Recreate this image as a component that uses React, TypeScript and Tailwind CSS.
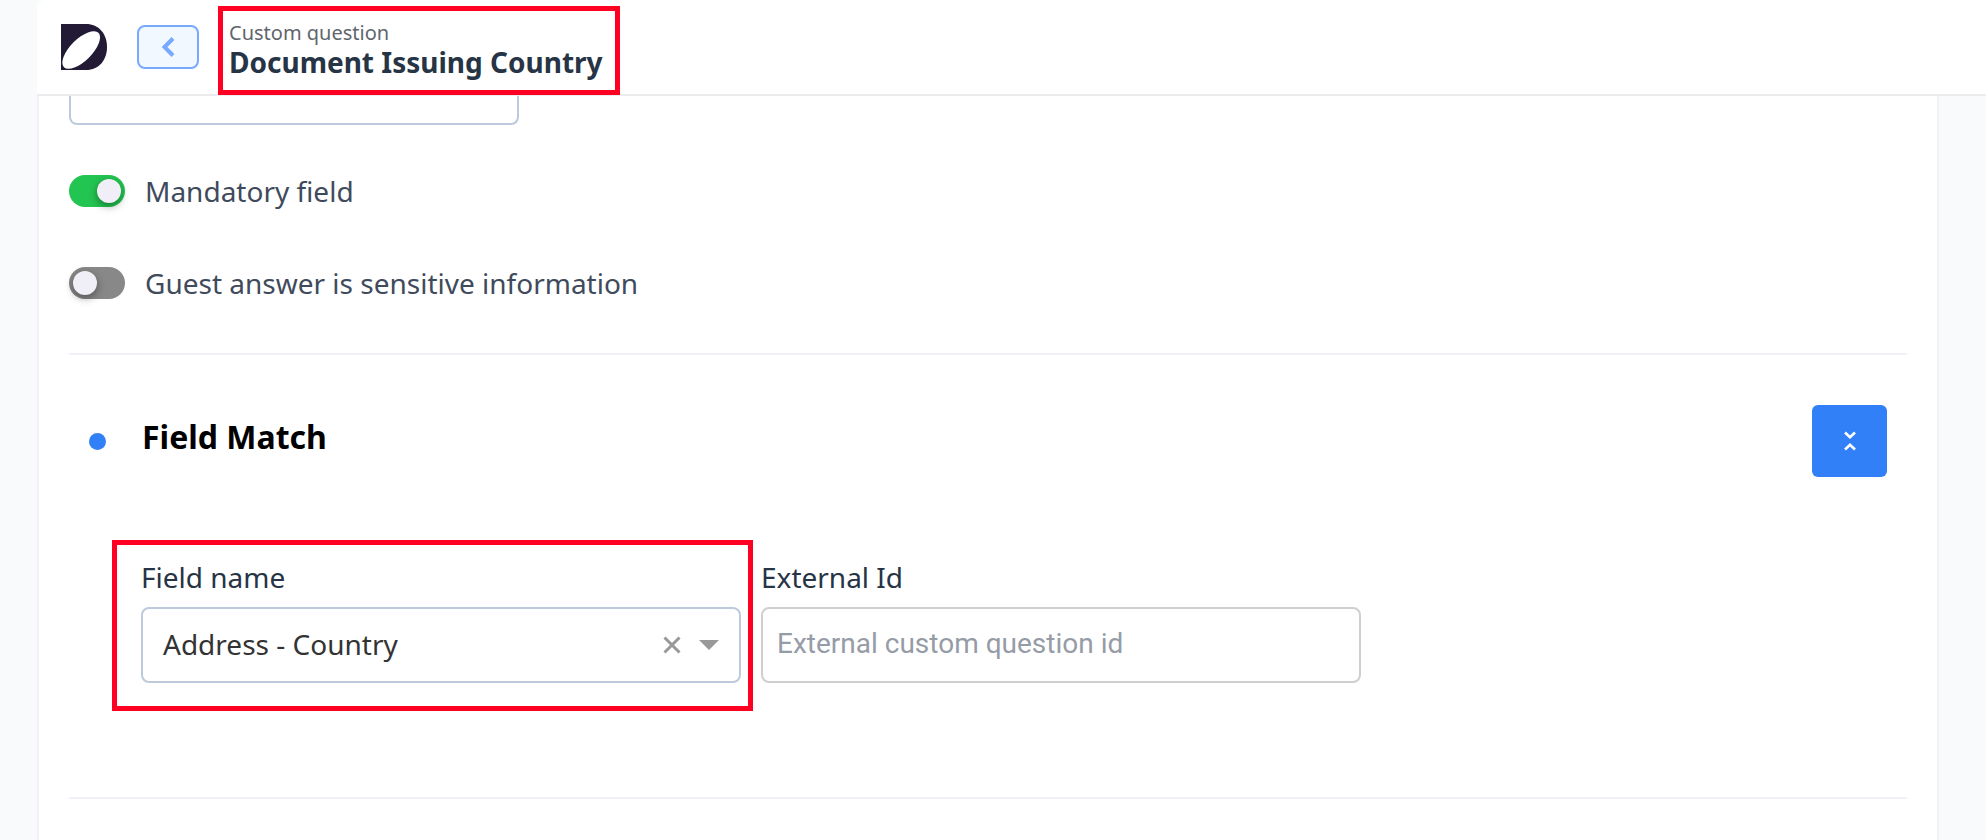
import { useId, useState } from "react";

function Logo() {
  return (
    <svg width="46" height="46" viewBox="0 0 46 46" aria-hidden="true">
      <path d="M0 0H25C38 0 46 10 46 23S38 46 25 46H0Z" fill="#231b35" />
      <ellipse cx="20.2" cy="26" rx="24.4" ry="10.8" transform="rotate(-45 20.2 26)" fill="#fff" />
    </svg>
  );
}

function Toggle({ label, initial }: { label: string; initial: boolean }) {
  const [on, setOn] = useState(initial);
  return (
    <label className="flex h-8 items-center gap-5 text-[28px] text-[#3f4b5c]">
      <input
        type="checkbox"
        checked={on}
        onChange={(e) => setOn(e.target.checked)}
        className="flex h-8 w-14 shrink-0 cursor-pointer appearance-none items-center rounded-full bg-[#888888] px-1 before:block before:size-6 before:rounded-full before:bg-[#f0eff7] before:shadow-[0_3px_8px_rgba(0,0,0,0.4)] checked:justify-end checked:bg-[#23c552]"
      />
      {label}
    </label>
  );
}

export default function App() {
  const id = useId();
  const [field, setField] = useState("Address - Country");
  return (
    <div className="flex h-screen flex-col overflow-hidden bg-[#f9fafc] pl-[37px] font-['Noto_Sans',sans-serif]">
      <header className="flex h-24 shrink-0 items-center rounded-tl-lg border-b-2 border-[#ececee] bg-white pl-6">
        <Logo />
        <button
          type="button"
          aria-label="Back"
          className="mr-[19px] ml-[30px] flex h-11 w-[62px] items-center justify-center rounded-lg border-2 border-[#76a9ff] bg-[#f2f8ff]"
        >
          <svg width="14" height="20" viewBox="0 0 14 20" fill="none" stroke="#76a9ff" strokeWidth="4" aria-hidden="true">
            <path d="M12 1.5 3.5 10 12 18.5" />
          </svg>
        </button>
        <div className="mt-[6px] h-[89px] border-[5px] border-[#ff0022] pt-2 pr-3 pl-[6px]">
          <p className="text-xl leading-7 text-[#5f656d]">Custom question</p>
          <h1 className="text-[28px] leading-[30px] font-bold text-[#263445]">Document Issuing Country</h1>
        </div>
      </header>

      <main className="mr-[47px] flex grow flex-col border-x-2 border-[#f0f0f6] bg-white px-[30px]">
        <div className="h-[29px] w-[450px] shrink-0 rounded-b-lg border-2 border-t-0 border-[#bccadb]" />

        <div className="flex flex-col gap-[60px] pt-[50px] pb-[54px]">
          <Toggle label="Mandatory field" initial={true} />
          <Toggle label="Guest answer is sensitive information" initial={false} />
        </div>

        <section className="border-y-2 border-[#f0f0f6] pt-[50px] pb-[86px]">
          <div className="flex h-[72px] items-center px-5">
            <span className="size-[17px] rounded-full bg-[#3180f7]" />
            <h2 className="mb-2 ml-9 text-[32px] leading-10 font-bold text-black">Field Match</h2>
            <button
              type="button"
              aria-label="Collapse section"
              className="ml-auto flex h-[72px] w-[75px] items-center justify-center rounded-md bg-[#3180f7]"
            >
              <svg width="12" height="20" viewBox="0 0 12 20" fill="none" stroke="#fff" strokeWidth="2.6" aria-hidden="true">
                <path d="M1 1.5 6 6.3 11 1.5M1 18.5 6 13.7 11 18.5" />
              </svg>
            </button>
          </div>

          <div className="mt-[63px] ml-[43px] flex items-start gap-2 text-[28px]">
            <div className="w-[641px] border-[5px] border-[#ff0022] pt-3 pr-[7px] pb-[23px] pl-6">
              <label htmlFor={`${id}-name`} className="block pb-[10px] leading-10 text-[#263445]">
                Field name
              </label>
              <div className="relative">
                <select
                  id={`${id}-name`}
                  value={field}
                  onChange={(e) => setField(e.target.value)}
                  className="h-[76px] w-full appearance-none rounded-lg border-2 border-[#bccadb] bg-white pr-24 pb-[3px] pl-5 text-[#333333]"
                >
                  <option value=""></option>
                  <option>Address - Country</option>
                </select>
                <button type="button" aria-label="Clear" onClick={() => setField("")} className="absolute inset-y-0 right-[60px] my-auto h-5">
                  <svg width="18" height="18" viewBox="0 0 18 18" fill="none" stroke="#999" strokeWidth="3" aria-hidden="true">
                    <path d="M1.5 1.5 16.5 16.5M16.5 1.5 1.5 16.5" />
                  </svg>
                </button>
                <svg
                  width="20"
                  height="10"
                  viewBox="0 0 20 10"
                  aria-hidden="true"
                  className="pointer-events-none absolute inset-y-0 right-[22px] my-auto"
                >
                  <path d="M0 0H20L10 10Z" fill="#999" />
                </svg>
              </div>
            </div>
            <div className="w-[600px] pt-[17px]">
              <label htmlFor={`${id}-ext`} className="block pb-[10px] leading-10 text-[#263445]">
                External Id
              </label>
              <input
                id={`${id}-ext`}
                type="text"
                placeholder="External custom question id"
                className="h-[76px] w-full rounded-lg border-2 border-[#cfcfcf] bg-white px-[14px] pb-[3px] font-['Roboto',sans-serif] placeholder:text-[#969ca6]"
              />
            </div>
          </div>
        </section>
      </main>
    </div>
  );
}
